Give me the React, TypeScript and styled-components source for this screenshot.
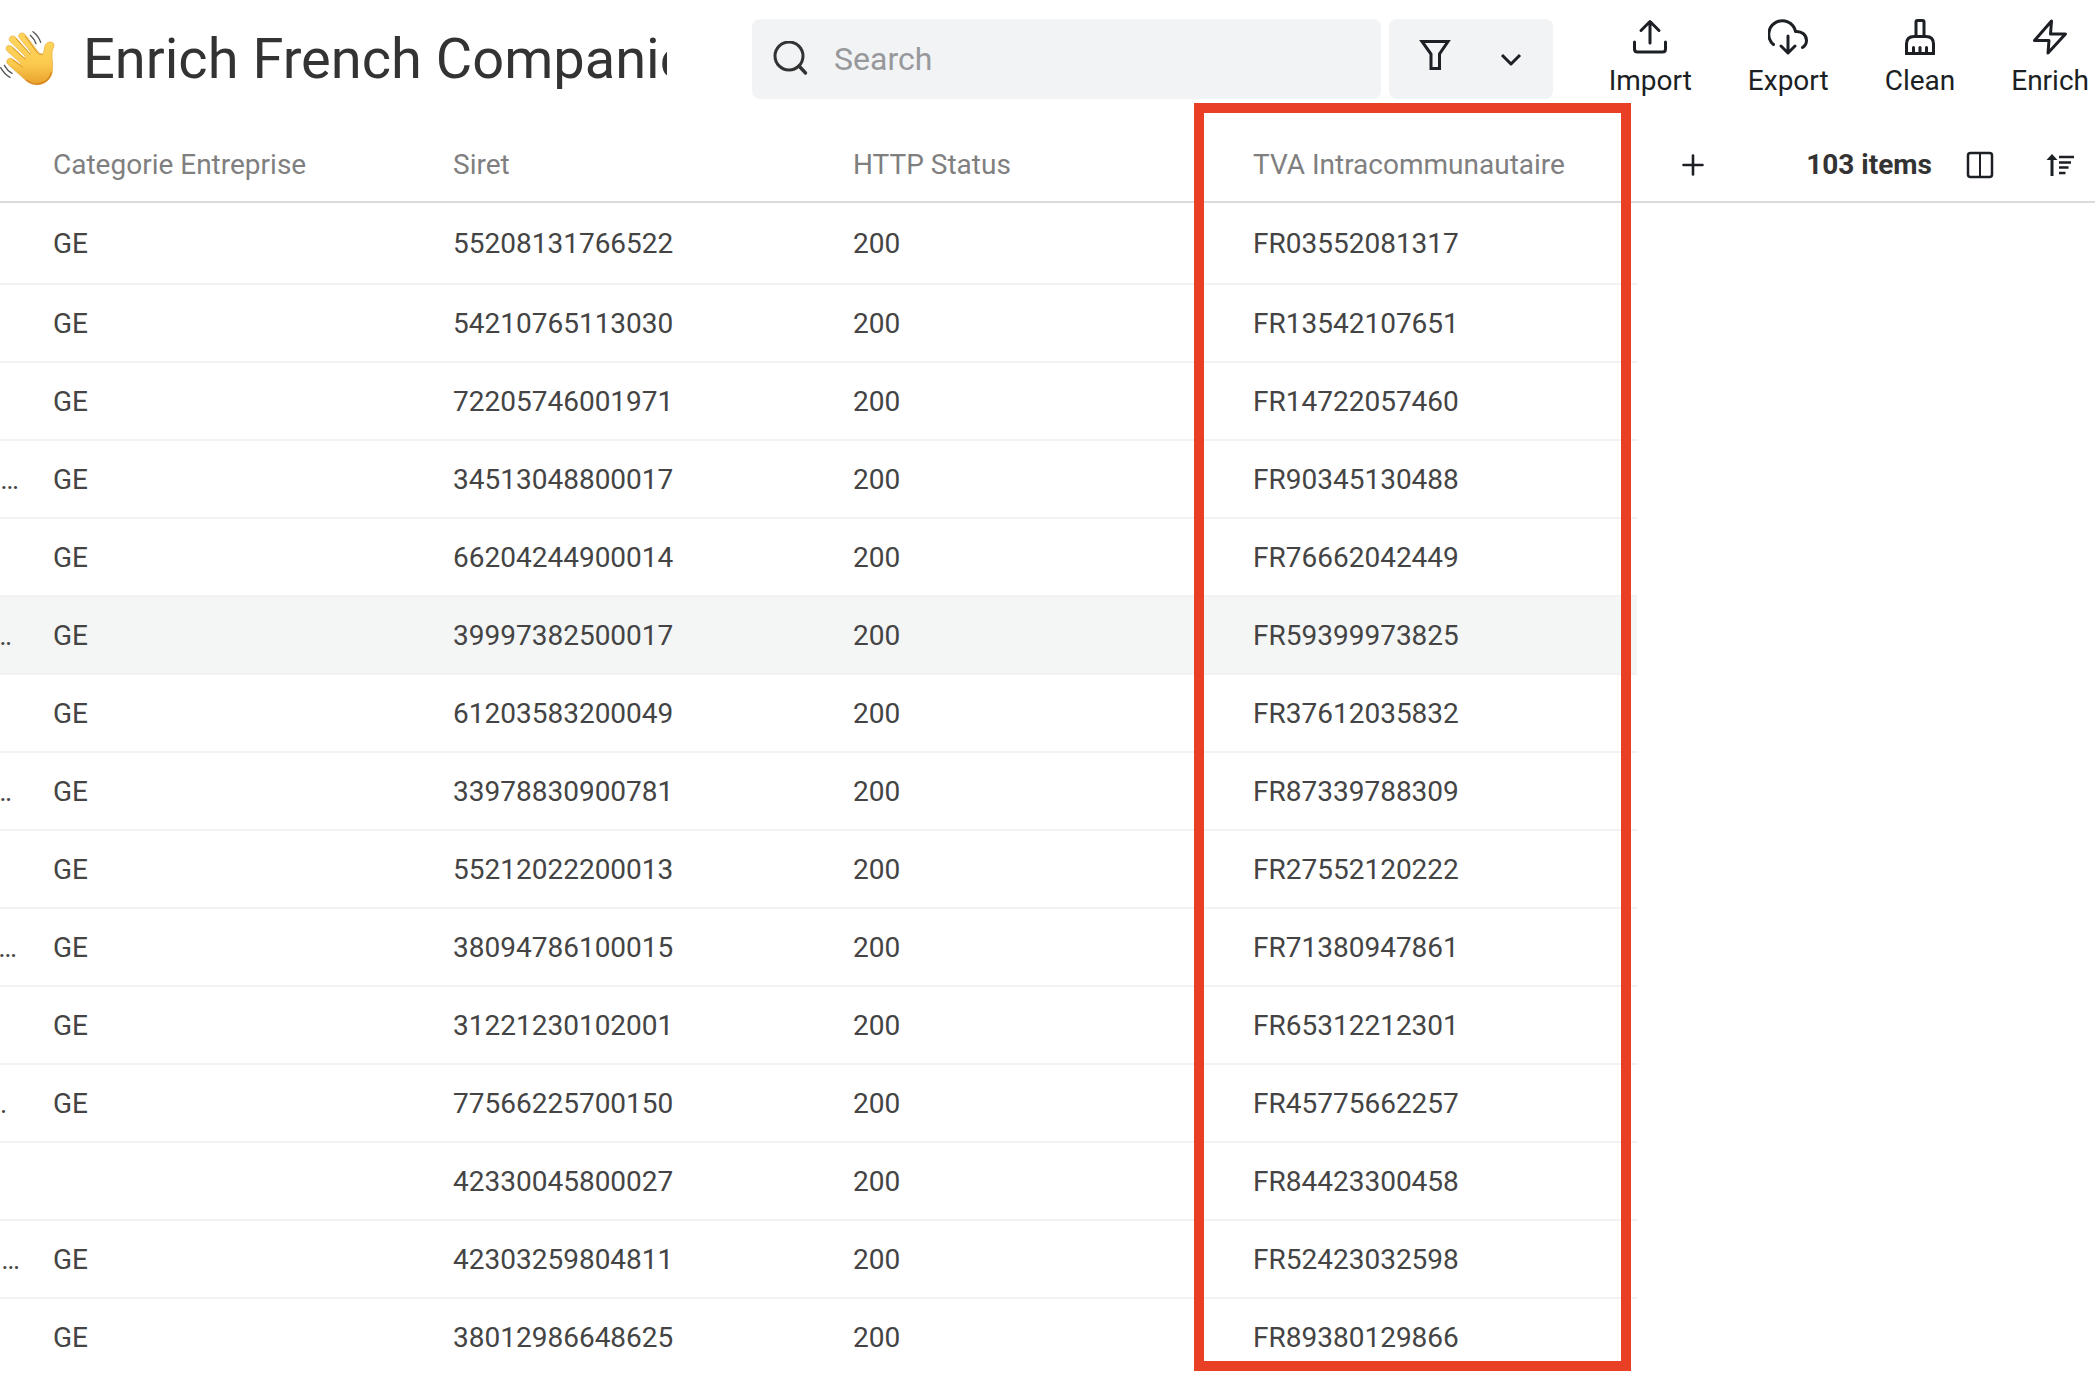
import React from "react";
import styled, { createGlobalStyle } from "styled-components";

const GlobalStyle = createGlobalStyle`
  *, *::before, *::after { box-sizing: border-box; }
  body {
    margin: 0;
    background: #fff;
    font-family: Roboto, "Liberation Sans", sans-serif;
    font-size: 28px;
    line-height: 32px;
    color: #444;
  }
  button, input { font: inherit; color: inherit; }
`;

const Page = styled.div`
  display: flex;
  flex-direction: column;
  height: 100vh;
  overflow: hidden;
`;

const TopBar = styled.header`
  display: flex;
  align-items: flex-start;
  flex: none;
  height: 126px;
  padding: 19px 6px 0 0;
`;

const Title = styled.h1`
  display: flex;
  align-items: center;
  flex: none;
  gap: 27px;
  width: 667px;
  height: 80px;
  margin: 0 85px 0 0;
  overflow: hidden;
  white-space: nowrap;
  font-size: 56px;
  line-height: 72px;
  font-weight: 400;
  color: #333;

  svg { flex: none; }
`;

const SearchBox = styled.label`
  display: flex;
  align-items: center;
  flex: 1;
  min-width: 200px;
  gap: 26px;
  height: 80px;
  padding: 0 20px;
  border-radius: 8px;
  background: #f2f3f5;
  color: #333;

  svg { flex: none; }
`;

const SearchInput = styled.input`
  flex: 1;
  min-width: 0;
  padding: 0;
  border: 0;
  outline: 0;
  background: transparent;
  font-size: 32px;
  line-height: 40px;

  &::placeholder { color: #97989b; opacity: 1; }
`;

const IconButton = styled.button`
  display: flex;
  align-items: center;
  justify-content: center;
  padding: 0;
  border: 0;
  background: transparent;
  color: #1c1f24;
  cursor: pointer;
`;

const FilterGroup = styled.div`
  display: flex;
  align-items: center;
  flex: none;
  gap: 48px;
  height: 80px;
  margin-left: 8px;
  padding: 0 30px;
  border-radius: 8px;
  background: #f2f3f5;
`;

const Actions = styled.nav`
  display: flex;
  flex: none;
  gap: 56px;
  margin-left: 56px;
`;

const ActionButton = styled(IconButton)`
  flex-direction: column;
  gap: 10px;
`;

const Grid = styled.main`
  position: relative;
  display: flex;
  flex: 1;
  align-items: flex-start;
  min-height: 0;
`;

const Table = styled.table`
  flex: none;
  width: 1637px;
  table-layout: fixed;
  border-collapse: separate;
  border-spacing: 0;
`;

const LeadCol = styled.col`
  width: 37px;
`;

const HeadCell = styled.th`
  height: 77px;
  padding: 2px 16px 0;
  border-bottom: 2px solid #dadbdf;
  text-align: left;
  font-weight: 400;
  white-space: nowrap;
  color: #7f7f7f;
`;

const Row = styled.tr<{ $active?: boolean }>`
  background: ${(p) => (p.$active ? "#f4f6f6" : "transparent")};
`;

const Cell = styled.td<{ $first?: boolean }>`
  height: ${(p) => (p.$first ? 82 : 78)}px;
  padding: 2px 16px 0;
  border-bottom: 2px solid #f2f2f3;
  white-space: nowrap;
`;

const LeadCell = styled(Cell)`
  padding: 2px 0 0;
  overflow: hidden;
`;

const Clipped = styled.div`
  display: flex;
  justify-content: flex-end;
`;

const TableTools = styled.div`
  display: flex;
  align-items: center;
  justify-content: space-between;
  flex: 1;
  height: 77px;
  padding: 2px 21px 0 44px;
  border-bottom: 2px solid #dadbdf;
`;

const ToolGroup = styled.div`
  display: flex;
  align-items: center;
`;

const Count = styled.strong`
  margin-right: 34px;
  font-weight: 700;
  white-space: nowrap;
  color: #333;
`;

const SortButton = styled(IconButton)`
  margin-left: 52px;
`;

const ColumnHighlight = styled.div`
  position: absolute;
  top: -23px;
  bottom: 2px;
  left: 1194px;
  width: 437px;
  border: 10px solid #e94025;
  pointer-events: none;
`;

const line = {
  fill: "none",
  stroke: "currentColor",
  strokeWidth: 3,
  strokeLinecap: "round" as const,
  strokeLinejoin: "round" as const,
};

const WaveIcon = () => (
  <svg width="56" height="56" viewBox="0 60 168 168" role="img" aria-label="Waving hand">
    <defs>
      <linearGradient id="skin" x1="0" y1="60" x2="0" y2="222" gradientUnits="userSpaceOnUse">
        <stop offset="0" stopColor="#ffd75e" />
        <stop offset="0.6" stopColor="#fbcb4f" />
        <stop offset="1" stopColor="#e89f2c" />
      </linearGradient>
    </defs>
    <path
      fill="url(#skin)"
      stroke="#e6a738"
      strokeWidth="2"
      d="M57 79C53 69 66 61 75 70L113 121C119 130 127 132 131 124C134 115 132 105 139 98C147 90 162 92 162 102C162 110 156 115 156 126C155 143 160 160 157 182C154 204 135 220 112 221C96 222 84 214 73 204L24 160C14 149 27 137 38 144L60 160L63 157L22 121C12 109 24 99 35 106L72 140L76 136L30 91C22 80 37 69 47 79L89 127L93 124Z"
    />
    <g fill="none" stroke="#dd982e" strokeWidth="3" strokeLinecap="round">
      <path d="M76 76L108 120Q116 132 127 131" />
      <path d="M49 84L90 129" />
      <path d="M38 110L76 145" />
      <path d="M40 148L68 169" />
    </g>
    <path d="M78 207Q94 219 112 219Q145 217 154 184" fill="none" stroke="#d68522" strokeWidth="4" />
    <g fill="none" stroke="#555" strokeWidth="4" strokeLinecap="round">
      <path d="M99 62Q116 75 122 94" />
      <path d="M91 73Q103 84 108 98" />
      <path d="M2 170Q14 191 30 199" />
      <path d="M13 163Q22 179 36 187" />
    </g>
  </svg>
);

const SearchIcon = () => (
  <svg width="36" height="36" viewBox="0 0 36 36" aria-hidden="true">
    <circle cx="17" cy="15" r="14" {...line} />
    <path d="M27 25L33.500 32" {...line} strokeWidth={3.400} />
  </svg>
);

const FilterIcon = () => (
  <svg width="32" height="40" viewBox="0 0 32 40" aria-hidden="true">
    <path d="M3 2.500H29L20.500 15V29.500H12V15Z" {...line} strokeLinejoin="miter" />
  </svg>
);

const ChevronIcon = () => (
  <svg width="24" height="24" viewBox="0 0 24 24" aria-hidden="true">
    <path d="M3 8L12 17L21 8" {...line} strokeLinecap="butt" />
  </svg>
);

const ImportIcon = () => (
  <svg width="40" height="36" viewBox="0 0 40 36" aria-hidden="true">
    <path d="M20 24V3M11 11.500L20 2.500L29 11.500M4.500 23V30Q4.500 33 7.500 33H32.500Q35.500 33 35.500 30V23" {...line} />
  </svg>
);

const ExportIcon = () => (
  <svg width="40" height="36" viewBox="0 0 40 36" aria-hidden="true">
    <path d="M5.500 25.500A13.500 13.500 0 1 1 27.500 12.500C34 12 38.500 16 38.500 21.500Q38.500 26 34.500 28.500M20 17V33.500M13 27L20 34L27 27" {...line} />
  </svg>
);

const CleanIcon = () => (
  <svg width="40" height="36" viewBox="0 0 40 36" aria-hidden="true">
    <path d="M16 17V3Q16 1.500 17.500 1.500H22.500Q24 1.500 24 3V17M6.500 34.500V25Q6.500 17.500 14 17.500H26Q33.500 17.500 33.500 25V34.500Z" {...line} strokeLinejoin="miter" />
    <path d="M13.500 28.500V34M20 28.500V34M26.500 28.500V34" {...line} />
  </svg>
);

const EnrichIcon = () => (
  <svg width="40" height="36" viewBox="0 0 40 36" aria-hidden="true">
    <path d="M21.500 2L4.500 21.500H19L18 34L35.500 15H20.500Z" {...line} />
  </svg>
);

const PlusIcon = () => (
  <svg width="24" height="24" viewBox="0 0 24 24" aria-hidden="true">
    <path d="M12 2.500V21.500M2.500 12H21.500" {...line} strokeWidth={2.600} />
  </svg>
);

const ColumnsIcon = () => (
  <svg width="28" height="28" viewBox="0 0 28 28" aria-hidden="true">
    <rect x="2" y="2" width="24" height="24" rx="2.500" {...line} strokeWidth={2.500} />
    <path d="M14 2V26" {...line} strokeWidth={2} />
  </svg>
);

const SortIcon = () => (
  <svg width="28" height="24" viewBox="0 0 28 24" aria-hidden="true">
    <path d="M6 4V23" {...line} strokeLinecap="butt" />
    <path d="M0.500 7L6 1L11.500 7Z" fill="currentColor" />
    <path d="M13 4H28M13 9.500H25M13 14.500H22.500M13 20H19.500" {...line} strokeWidth={2.500} strokeLinecap="butt" />
  </svg>
);

const ACTIONS = [
  { label: "Import", Icon: ImportIcon },
  { label: "Export", Icon: ExportIcon },
  { label: "Clean", Icon: CleanIcon },
  { label: "Enrich", Icon: EnrichIcon },
];

const COLUMNS = ["Categorie Entreprise", "Siret", "HTTP Status", "TVA Intracommunautaire"];

interface Company {
  category: string;
  siret: string;
  tva: string;
  /** Dots still visible from the truncated column on the left, and the space after them. */
  rest?: string;
  restGap?: number;
  active?: boolean;
}

const ROWS: Company[] = [
  { category: "GE", siret: "55208131766522", tva: "FR03552081317" },
  { category: "GE", siret: "54210765113030", tva: "FR13542107651" },
  { category: "GE", siret: "72205746001971", tva: "FR14722057460" },
  { category: "GE", siret: "34513048800017", tva: "FR90345130488", rest: "…", restGap: 18 },
  { category: "GE", siret: "66204244900014", tva: "FR76662042449" },
  { category: "GE", siret: "39997382500017", tva: "FR59399973825", rest: "…", restGap: 25, active: true },
  { category: "GE", siret: "61203583200049", tva: "FR37612035832" },
  { category: "GE", siret: "33978830900781", tva: "FR87339788309", rest: "…", restGap: 25 },
  { category: "GE", siret: "55212022200013", tva: "FR27552120222" },
  { category: "GE", siret: "38094786100015", tva: "FR71380947861", rest: "…", restGap: 20 },
  { category: "GE", siret: "31221230102001", tva: "FR65312212301" },
  { category: "GE", siret: "77566225700150", tva: "FR45775662257", rest: "…", restGap: 30 },
  { category: "", siret: "42330045800027", tva: "FR84423300458" },
  { category: "GE", siret: "42303259804811", tva: "FR52423032598", rest: "…", restGap: 17 },
  { category: "GE", siret: "38012986648625", tva: "FR89380129866" },
];

export default function App() {
  return (
    <Page>
      <GlobalStyle />
      <TopBar>
        <Title>
          <WaveIcon />
          Enrich French Companies
        </Title>
        <SearchBox>
          <SearchIcon />
          <SearchInput type="search" placeholder="Search" aria-label="Search" />
        </SearchBox>
        <FilterGroup>
          <IconButton type="button" aria-label="Filter">
            <FilterIcon />
          </IconButton>
          <IconButton type="button" aria-label="More filters">
            <ChevronIcon />
          </IconButton>
        </FilterGroup>
        <Actions>
          {ACTIONS.map(({ label, Icon }) => (
            <ActionButton key={label} type="button">
              <Icon />
              {label}
            </ActionButton>
          ))}
        </Actions>
      </TopBar>
      <Grid>
        <Table>
          <colgroup>
            <LeadCol />
            <col />
            <col />
            <col />
            <col />
          </colgroup>
          <thead>
            <tr>
              <HeadCell as="td" />
              {COLUMNS.map((name) => (
                <HeadCell key={name} scope="col">
                  {name}
                </HeadCell>
              ))}
            </tr>
          </thead>
          <tbody>
            {ROWS.map((row, i) => (
              <Row key={row.siret} $active={row.active}>
                <LeadCell $first={i === 0}>
                  {row.rest && <Clipped style={{ paddingRight: row.restGap }}>{row.rest}</Clipped>}
                </LeadCell>
                <Cell>{row.category}</Cell>
                <Cell>{row.siret}</Cell>
                <Cell>200</Cell>
                <Cell>{row.tva}</Cell>
              </Row>
            ))}
          </tbody>
        </Table>
        <TableTools>
          <IconButton type="button" aria-label="Add column">
            <PlusIcon />
          </IconButton>
          <ToolGroup>
            <Count>103 items</Count>
            <IconButton type="button" aria-label="Columns">
              <ColumnsIcon />
            </IconButton>
            <SortButton type="button" aria-label="Sort">
              <SortIcon />
            </SortButton>
          </ToolGroup>
        </TableTools>
        <ColumnHighlight />
      </Grid>
    </Page>
  );
}
